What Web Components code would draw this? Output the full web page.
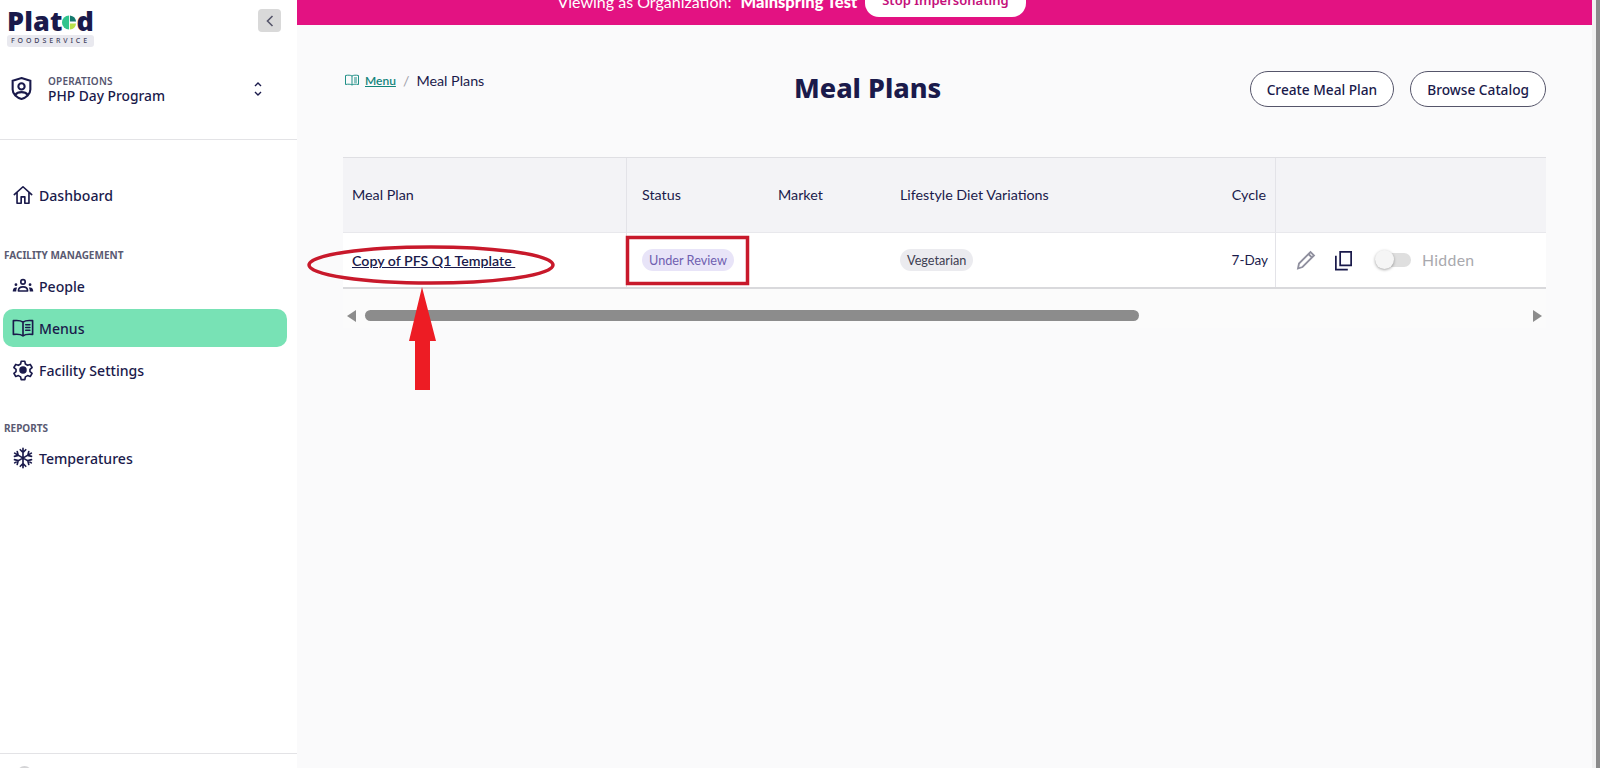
<!DOCTYPE html>
<html lang="en">
<head>
<meta charset="utf-8">
<title>Meal Plans</title>
<style>
html,body{margin:0;padding:0;height:100%;overflow:hidden;}
body{font-family:"Noto Sans","Liberation Sans",sans-serif;color:#1a1a4b;background:#fafafb;}
</style>
</head>
<body>
<app-shell>
    <side-nav slot="side"></side-nav>
    <impersonation-banner slot="main"></impersonation-banner>
    <page-header slot="main"></page-header>
    <meal-table slot="main"></meal-table>
</app-shell>
<review-marks></review-marks>

<script>
const ICONS = {
    home: `<path d="M2.500 11.500 12 3l9.500 8.500M5.500 9v12h4.500v-7h4v7h4.500V9"/>`,
    people: `<circle cx="12" cy="7.500" r="2.400"/><path d="M7 17.500c0-3 2-4.500 5-4.500s5 1.500 5 4.500z"/><circle cx="4.300" cy="10.500" r="1.500" fill="currentColor" stroke="none"/><circle cx="19.700" cy="10.500" r="1.500" fill="currentColor" stroke="none"/><path d="M.8 18c0-2.800 1.200-4.500 3.500-4.500.8 0 1.300.2 1.300.2-.7 1.200-1 2.700-1 4.300zM23.200 18c0-2.800-1.200-4.500-3.500-4.500-.8 0-1.300.2-1.300.2.7 1.200 1 2.700 1 4.300z" fill="currentColor" stroke="none"/>`,
    book: `<path d="M12 5.500C10 4 6 3.500 1.500 4v15c4.500-.5 8.500 0 10.500 1.500 2-1.500 6-2 10.500-1.500V4C18 3.500 14 4 12 5.500zM12 5.500v15M15 8.500h4.500M15 11.500h4.500M15 14.500h4.500"/>`,
    gear: `<path d="M10 2.500h4l.6 3 2.400 1.400 2.900-1 2 3.400-2.300 2v2.400l2.300 2-2 3.400-2.900-1-2.400 1.400-.6 3h-4l-.6-3L7 18.100l-2.900 1-2-3.400 2.300-2v-2.400l-2.300-2 2-3.400 2.900 1L9.400 5.500z"/><circle cx="12" cy="12" r="3.200" fill="currentColor"/>`,
    snow: `<path d="M12 1.500v21M2.900 6.700l18.200 10.600M2.900 17.300 21.100 6.700M9 3l3 3 3-3M9 21l3-3 3 3M2.700 10.200l4.100-1.100-1.100-4.100M21.300 13.800l-4.100 1.100 1.100 4.100M2.700 13.800l4.100 1.100-1.100 4.100M21.300 10.200l-4.100-1.100 1.100-4.100"/>`
};

class NavItem extends HTMLElement {
    constructor() {
        super();
        this.shadowDOM = this.attachShadow({ mode: "open" });
    }
    connectedCallback() {
        this.shadowDOM.innerHTML = `
        <style>
        :host{
            display:flex;
            align-items:center;
            height:38px;
            margin:0 10px 0 3px;
            padding-left:9px;
            gap:5px;
            border-radius:10px;
            font-size:14.100px;
            font-weight:500;
            color:#1a1a4b;
        }
        :host([active]){background:#78e2b5;}
        svg{width:22px;height:22px;fill:none;stroke:currentColor;stroke-width:1.800;stroke-linejoin:round;stroke-linecap:round;flex:none;}
        </style>
        <svg viewBox="0 0 24 24">${ICONS[this.getAttribute("icon")]}</svg>
        <slot></slot>
        `;
    }
}
customElements.define("nav-item", NavItem);

class SideNav extends HTMLElement {
    constructor() {
        super();
        this.shadowDOM = this.attachShadow({ mode: "open" });
    }
    connectedCallback() {
        this.shadowDOM.innerHTML = `
        <style>
        :host{
            display:flex;
            flex-direction:column;
            width:297px;
            height:768px;
            box-sizing:border-box;
            background:#fff;
            overflow:hidden;
        }
        .top{display:flex;justify-content:space-between;align-items:flex-start;padding:9px 16px 0 7px;height:60px;box-sizing:border-box;}
        .logo{width:87px;}
        .word{display:flex;align-items:center;font-family:"Noto Sans",sans-serif;font-weight:900;font-size:27px;line-height:24px;height:24px;color:#1a1a4b;letter-spacing:.1px;}
        .word svg{width:17px;height:17px;margin:3px 0 0 0;}
        .tag{margin-top:2px;background:#e9e9ef;border-radius:3px;height:12px;line-height:12px;font-size:7px;font-weight:500;letter-spacing:2.900px;text-align:center;color:#44445f;white-space:nowrap;overflow:hidden;}
        .collapse{width:23px;height:23px;border-radius:4px;background:#d9d9d9;display:flex;align-items:center;justify-content:center;}
        .collapse svg{width:12px;height:14px;fill:none;stroke:#55556a;stroke-width:1.600;}
        .ops{display:flex;align-items:center;height:79px;padding:0 33px 0 10px;border-bottom:1px solid #e3e3e6;}
        .ops>svg{width:23px;height:25px;fill:none;stroke:#1a1a4b;stroke-width:2;margin-right:15px;margin-top:-22px;flex:none;}
        .ops-text{flex:1;margin-top:-20px;}
        .kind{font-size:10px;font-weight:600;line-height:12px;color:#55556f;letter-spacing:.2px;}
        .name{font-size:13.800px;font-weight:500;line-height:17px;color:#1a1a4b;}
        .ops>svg.updown{width:12px;height:18px;stroke-width:1.400;margin:-21px 0 0 0;}
        .first{margin-top:36px;}
        h3{margin:0 0 6px 4px;font-size:10px;line-height:12px;font-weight:700;color:#5a5a72;letter-spacing:0;}
        .facility{margin-top:35px;}
        .reports{margin-top:33px;}
        .reports h3{margin-bottom:5px;}
        .stack{display:flex;flex-direction:column;gap:4px;}
        .foot{margin-top:auto;border-top:1px solid #e3e3e6;height:15px;box-sizing:border-box;overflow:hidden;padding:12px 0 0 17px;}
        .foot span{display:block;width:15px;height:15px;border-radius:50%;background:#d4d4d6;}
        </style>
        <div class="top">
            <div class="logo">
                <div class="word">Plat<svg viewBox="0 0 16 16"><path d="M8 0a8 8 0 0 0 0 16z" fill="#2fc48d"/><path d="M9 0a8 8 0 0 1 7 7H9z" fill="#157a6e"/><path d="M9 9h7a8 8 0 0 1-7 7z" fill="#b9e24c"/></svg>d</div>
                <div class="tag">FOODSERVICE</div>
            </div>
            <div class="collapse"><svg viewBox="0 0 12 14"><path d="M8.500 2 3.500 7l5 5"/></svg></div>
        </div>
        <div class="ops">
            <svg viewBox="0 0 22 24"><path d="M11 2l8.500 2.500v8.500c0 4.500-4 8-8.500 9-4.500-1-8.500-4.500-8.500-9V4.500z"/><circle cx="11" cy="10" r="3"/><path d="M5 18c1.500-2 3.500-2.500 6-2.500s4.500.5 6 2.500"/></svg>
            <div class="ops-text">
                <div class="kind">OPERATIONS</div>
                <div class="name">PHP Day Program</div>
            </div>
            <svg class="updown" viewBox="0 0 12 18"><path d="M3 6 6 3l3 3M3 12l3 3 3-3"/></svg>
        </div>
        <div class="first"><nav-item icon="home">Dashboard</nav-item></div>
        <div class="facility">
            <h3>FACILITY MANAGEMENT</h3>
            <div class="stack">
                <nav-item icon="people">People</nav-item>
                <nav-item icon="book" active>Menus</nav-item>
                <nav-item icon="gear">Facility Settings</nav-item>
            </div>
        </div>
        <div class="reports">
            <h3>REPORTS</h3>
            <nav-item icon="snow">Temperatures</nav-item>
        </div>
        <div class="foot"><span></span></div>
        `;
    }
}
customElements.define("side-nav", SideNav);

class ImpersonationBanner extends HTMLElement {
    constructor() {
        super();
        this.shadowDOM = this.attachShadow({ mode: "open" });
    }
    connectedCallback() {
        this.shadowDOM.innerHTML = `
        <style>
        :host{
            display:flex;
            justify-content:center;
            align-items:flex-end;
            height:25px;
            padding:0 306px 8px 0;
            box-sizing:border-box;
            background:#e31282;
            color:#fff;
            font-family:"Lato",sans-serif;
            font-size:16px;
            line-height:26px;
            overflow:hidden;
            white-space:nowrap;
        }
        b{margin-left:9px;font-weight:900;font-size:16.500px;}
        button{
            margin-left:8px;
            height:34px;
            flex:none;
            padding:0 17px;
            border:0;
            border-radius:14px;
            background:#fff;
            color:#c4107a;
            font-family:"Noto Sans",sans-serif;
            font-size:13px;
            font-weight:600;
        }
        span,b{display:block;margin-bottom:2px;}
        </style>
        <span>Viewing as Organization:</span><b>Mainspring Test</b><button>Stop Impersonating</button>
        `;
    }
}
customElements.define("impersonation-banner", ImpersonationBanner);

class PageHeader extends HTMLElement {
    constructor() {
        super();
        this.shadowDOM = this.attachShadow({ mode: "open" });
    }
    connectedCallback() {
        this.shadowDOM.innerHTML = `
        <style>
        :host{
            display:grid;
            grid-template-columns:451px auto 1fr;
            align-items:start;
            padding:46px 46px 0 46px;
            height:132px;
            box-sizing:border-box;
        }
        .crumbs{display:flex;align-items:center;gap:6px;margin-top:-1px;height:20px;font-family:"Lato",sans-serif;font-size:14.300px;color:#1a1a4b;padding-left:2px;}
        .crumbs svg{width:14px;height:12px;fill:none;stroke:#1f8f86;stroke-width:1;}
        a{color:#13857b;text-decoration:underline;font-size:12px;font-weight:600;}
        i{font-style:normal;color:#a0a0a8;margin:0 1px;}
        h1{margin:0;font-family:"Noto Sans",sans-serif;font-weight:800;font-size:27px;line-height:34px;color:#1a1a4b;}
        .actions{display:flex;justify-content:flex-end;gap:16px;}
        button{
            height:36px;
            padding:0 16px;
            border:1px solid #55556a;
            border-radius:18px;
            background:#fff;
            font-family:"Noto Sans",sans-serif;
            font-size:13.700px;
            font-weight:500;
            color:#1a1a4b;
            white-space:nowrap;
        }
        </style>
        <div class="crumbs">
            <svg viewBox="0 0 14 12"><path d="M7 2C5.500 1 3 1 .5 1.500v9C3 10 5.500 10 7 11c1.500-1 4-1 6.500-.5v-9C11 1 8.500 1 7 2zM7 2v9M9 4h3M9 6h3M9 8h3"/></svg>
            <a>Menu</a><i>/</i><span>Meal Plans</span>
        </div>
        <h1>Meal Plans</h1>
        <div class="actions"><button>Create Meal Plan</button><button>Browse Catalog</button></div>
        `;
    }
}
customElements.define("page-header", PageHeader);

class MealTable extends HTMLElement {
    constructor() {
        super();
        this.shadowDOM = this.attachShadow({ mode: "open" });
    }
    connectedCallback() {
        this.shadowDOM.innerHTML = `
        <style>
        :host{
            display:block;
            margin:0 46px;
            font-family:"Lato",sans-serif;
            font-size:14.300px;
            color:#1a1a4b;
        }
        .grid{
            display:grid;
            grid-template-columns:284px 136px 122px 1fr 91px 270px;
            grid-template-rows:75px 54px;
            border-top:1px solid #dfdfe3;
            border-bottom:2px solid #d9d9dc;
            box-sizing:border-box;
            background:#fff;
        }
        .grid>div{display:flex;align-items:center;padding-left:15px;box-sizing:border-box;white-space:nowrap;}
        .head{background:#f3f3f6;border-bottom:1px solid #e8e8ec;padding-bottom:2px;}
        .first{padding-left:9px !important;}
        .line{border-right:1px solid #e3e3e8;}
        .right{justify-content:flex-end;padding:0 9px 0 0 !important;}
        .head.right{padding-bottom:2px !important;}
        .cell-plan{font-weight:600;text-decoration:underline;font-size:14.200px;}
        .pill{display:inline-block;height:22px;line-height:22px;padding:0 7px;border-radius:11px;font-size:12.700px;}
        .review{background:#e8e4f8;color:#6f5fb0;}
        .diet{background:#ebebef;color:#3e3e52;}
        .day{margin-right:-2px;font-size:13.500px;}
        .tools{padding-left:19px !important;}
        .tools svg{flex:none;}
        .pencil{width:22px;height:22px;fill:none;stroke:#8f8f9e;stroke-width:1.800;margin-right:16px;}
        .copy{width:21px;height:21px;fill:none;stroke:#1a1a4b;stroke-width:1.800;margin-right:21px;}
        .switch{position:relative;width:36px;height:14px;border-radius:7px;background:#dfdfdf;margin-right:11px;flex:none;}
        .switch::before{content:"";position:absolute;left:0;top:-3px;width:19px;height:19px;border-radius:50%;background:#f5f5f5;box-shadow:0 1px 3px rgba(0,0,0,.35);}
        .hidden{color:#a9a9ae;font-size:15.800px;letter-spacing:.3px;margin-top:-1px;}
        .bar{display:flex;align-items:center;height:39px;box-sizing:border-box;padding:14px 4px 0 4px;background:#fbfbfb;gap:9px;}
        .arrow{width:0;height:0;border-top:6px solid transparent;border-bottom:6px solid transparent;flex:none;}
        .left{border-right:9px solid #8c8c8c;}
        .rightarrow{border-left:9px solid #8c8c8c;margin-left:auto;}
        .thumb{width:774px;height:11px;border-radius:6px;background:#8c8c8c;}
        </style>
        <div class="grid">
            <div class="head first line">Meal Plan</div>
            <div class="head">Status</div>
            <div class="head">Market</div>
            <div class="head">Lifestyle Diet Variations</div>
            <div class="head right line">Cycle</div>
            <div class="head"></div>

            <div class="first line"><span class="cell-plan">Copy of PFS Q1 Template&nbsp;</span></div>
            <div><span class="pill review">Under Review</span></div>
            <div></div>
            <div><span class="pill diet">Vegetarian</span></div>
            <div class="right line"><span class="day">7-Day</span></div>
            <div class="tools">
                <svg class="pencil" viewBox="0 0 22 22"><path d="M3 19.500 4 14.500 15.500 3l3.500 3.500L7.500 18zM13.500 5l3.500 3.500"/></svg>
                <svg class="copy" viewBox="0 0 22 22"><path d="M7.500 2h11.500v14H7.500zM3 6v14.500h12.500"/></svg>
                <span class="switch"></span>
                <span class="hidden">Hidden</span>
            </div>
        </div>
        <div class="bar">
            <span class="arrow left"></span>
            <span class="thumb"></span>
            <span class="arrow rightarrow"></span>
        </div>
        `;
    }
}
customElements.define("meal-table", MealTable);

class AppShell extends HTMLElement {
    constructor() {
        super();
        this.shadowDOM = this.attachShadow({ mode: "open" });
    }
    connectedCallback() {
        this.shadowDOM.innerHTML = `
        <style>
        :host{display:flex;width:1600px;height:768px;overflow:hidden;}
        .main{flex:1;min-width:0;}
        .track{width:8px;background:#f1f1f1;display:flex;justify-content:flex-end;flex:none;}
        .track span{width:4px;height:100%;background:#8b8b8b;}
        </style>
        <slot name="side"></slot>
        <div class="main"><slot name="main"></slot></div>
        <div class="track"><span></span></div>
        `;
    }
}
customElements.define("app-shell", AppShell);

// red markup drawn over the screenshot
class ReviewMarks extends HTMLElement {
    constructor() {
        super();
        this.shadowDOM = this.attachShadow({ mode: "open" });
    }
    connectedCallback() {
        this.shadowDOM.innerHTML = `
        <style>
        :host{position:absolute;left:0;top:0;width:1600px;height:768px;pointer-events:none;}
        svg{width:100%;height:100%;display:block;}
        </style>
        <svg viewBox="0 0 1600 768">
            <ellipse cx="431" cy="265" rx="122" ry="18" fill="none" stroke="#c8192b" stroke-width="3.500"/>
            <rect x="627.500" y="237.500" width="120" height="46" fill="none" stroke="#c8192b" stroke-width="3.500"/>
            <path d="M422 287 436 341H430V390H415V341H409z" fill="#ed1c24"/>
        </svg>
        `;
    }
}
customElements.define("review-marks", ReviewMarks);
</script>
</body>
</html>
